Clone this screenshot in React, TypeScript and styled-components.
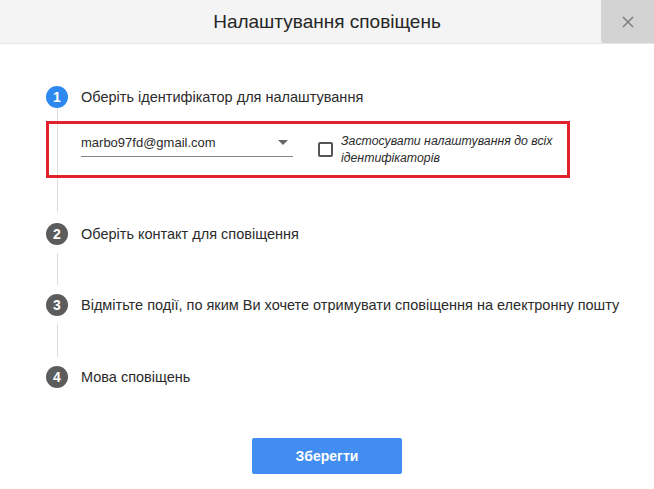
import * as React from 'react';
import styled, { createGlobalStyle } from 'styled-components';

const GlobalStyle = createGlobalStyle`
  body {
    margin: 0;
    background: #ffffff;
    font-family: 'Liberation Sans', Arial, sans-serif;
    color: #333333;
  }
`;

const Dialog = styled.div`
  width: 654px;
  height: 489px;
  background: #ffffff;
  display: flex;
  flex-direction: column;
`;

const Header = styled.div`
  display: grid;
  grid-template-columns: 53px 1fr 53px;
  height: 43px;
  background: #f4f4f4;
  border-bottom: 1px solid #e6e6e6;
`;

const Title = styled.h2`
  grid-column: 2;
  margin: 0;
  align-self: center;
  text-align: center;
  font-size: 19px;
  font-weight: 400;
  color: #262626;
`;

const CloseButton = styled.button`
  grid-column: 3;
  display: flex;
  align-items: center;
  justify-content: center;
  border: none;
  padding: 0;
  background: #d3d3d3;
  border-bottom-left-radius: 3px;
  cursor: pointer;
`;

const Content = styled.div`
  padding: 42px 0 0 46px;
  display: flex;
  flex-direction: column;
`;

const Step = styled.div`
  display: flex;
  flex-direction: column;
`;

const StepHead = styled.div`
  display: flex;
  align-items: center;
  gap: 13px;
  height: 22px;
`;

const StepNumber = styled.span<{ $active?: boolean }>`
  width: 22px;
  height: 22px;
  border-radius: 50%;
  background: ${({ $active }) => ($active ? '#2d88ef' : '#5c5c5c')};
  color: #ffffff;
  font-size: 14px;
  font-weight: 700;
  display: flex;
  align-items: center;
  justify-content: center;
`;

const StepTitle = styled.span`
  font-size: 14.5px;
  color: #2b2b2b;
`;

const StepBody = styled.div<{ $height?: number; $last?: boolean }>`
  position: relative;
  min-height: ${({ $height }) => $height ?? 50}px;

  &::before {
    content: '';
    display: ${({ $last }) => ($last ? 'none' : 'block')};
    position: absolute;
    left: 11px;
    top: 8px;
    bottom: 9px;
    width: 1px;
    background: #dddddd;
  }
`;

const FirstBody = styled(StepBody)`
  padding: 13px 0 45px;

  &::before {
    top: 0;
    bottom: 11px;
  }
`;

const Highlight = styled.div`
  position: relative;
  width: 486px;
  height: 51px;
  border: 3px solid #e1212c;
  display: flex;
  align-items: center;
  gap: 25px;
  padding-left: 32px;
  box-sizing: content-box;
`;

const Select = styled.div`
  width: 212px;
  display: flex;
  align-items: center;
  justify-content: space-between;
  padding: 0 0 6px;
  border-bottom: 1px solid #858585;
  font-size: 13px;
  color: #2b2b2b;
  margin-top: -8px;
`;

const Caret = styled.span`
  width: 0;
  height: 0;
  border-left: 5px solid transparent;
  border-right: 5px solid transparent;
  border-top: 5px solid #666666;
  margin-right: 5px;
`;

const CheckRow = styled.label`
  display: flex;
  align-items: center;
  gap: 8px;
`;

const Checkbox = styled.span`
  width: 11px;
  height: 11px;
  border: 2px solid #555555;
  border-radius: 2px;
  flex-shrink: 0;
`;

const CheckLabel = styled.span`
  font-size: 12.3px;
  font-style: italic;
  line-height: 17px;
  color: #2b2b2b;
  width: 216px;
`;

const Footer = styled.div`
  display: flex;
  justify-content: center;
`;

const SaveButton = styled.button`
  width: 150px;
  height: 36px;
  border: none;
  border-radius: 2px;
  background: #418df1;
  color: #ffffff;
  font-family: inherit;
  font-size: 14px;
  font-weight: 700;
  cursor: pointer;
`;

const steps = [
  'Оберіть контакт для сповіщення',
  'Відмітьте події, по яким Ви хочете отримувати сповіщення на електронну пошту',
  'Мова сповіщень',
];

const App = () => {
  return (
    <>
      <GlobalStyle />
      <Dialog>
        <Header>
          <Title>Налаштування сповіщень</Title>
          <CloseButton type="button" aria-label="close">
            <svg width="12" height="12" viewBox="0 0 12 12">
              <path d="M1 1L11 11M11 1L1 11" stroke="#808080" strokeWidth="1.6" />
            </svg>
          </CloseButton>
        </Header>
        <Content>
          <Step>
            <StepHead>
              <StepNumber $active>1</StepNumber>
              <StepTitle>Оберіть ідентифікатор для налаштування</StepTitle>
            </StepHead>
            <FirstBody>
              <Highlight>
                <Select>
                  <span>marbo97fd@gmail.com</span>
                  <Caret />
                </Select>
                <CheckRow>
                  <Checkbox />
                  <CheckLabel>Застосувати налаштування до всіх ідентифікаторів</CheckLabel>
                </CheckRow>
              </Highlight>
            </FirstBody>
          </Step>
          {steps.map((title, i) => (
            <Step key={title}>
              <StepHead>
                <StepNumber>{i + 2}</StepNumber>
                <StepTitle>{title}</StepTitle>
              </StepHead>
              <StepBody $height={i === 0 ? 49 : 50} $last={i === steps.length - 1} />
            </Step>
          ))}
        </Content>
        <Footer>
          <SaveButton type="button">Зберегти</SaveButton>
        </Footer>
      </Dialog>
    </>
  );
};

export default App;
